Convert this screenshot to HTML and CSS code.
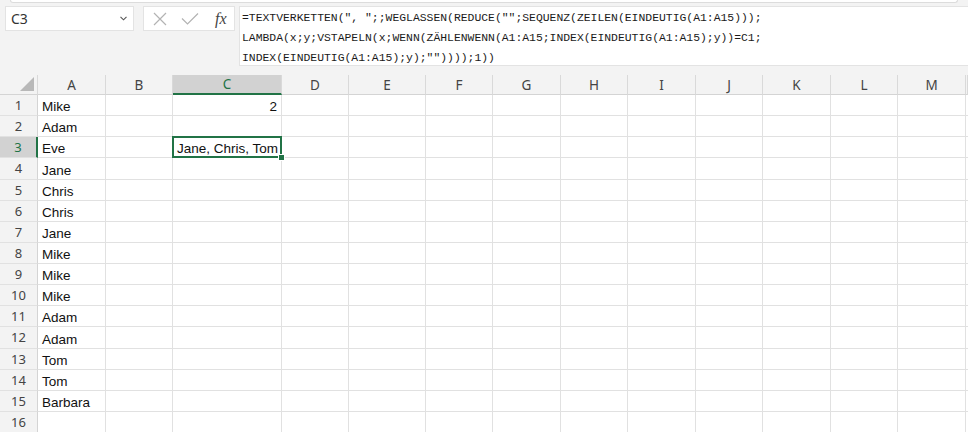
FILE: index.html
```html
<!DOCTYPE html>
<html>

<head>
    <meta charset="utf-8">
    <title>Tabelle1</title>
    <link rel="stylesheet" href="styles.css">
</head>

<body>
    <div class="top">
        <div class="ribbon-edge"></div>
        <div class="formula-row">
            <div class="name-box">
                <span>C3</span>
                <svg width="7" height="5" viewBox="0 0 7 5"><path d="M0.5 0.8L3.5 3.8L6.5 0.8" fill="none" stroke="#555" stroke-width="1.1"/></svg>
            </div>
            <div class="fx-buttons">
                <svg class="icon-cancel" width="14" height="14" viewBox="0 0 14 14"><path d="M1 1L13 13M13 1L1 13" stroke="#b3b3b3" stroke-width="1.2"/></svg>
                <svg class="icon-enter" width="18" height="12" viewBox="0 0 18 12"><path d="M1 5.5L6.5 11L17 0.5" fill="none" stroke="#b3b3b3" stroke-width="1.2"/></svg>
                <span class="fx">fx</span>
            </div>
            <div class="formula">
                <div>=TEXTVERKETTEN(", ";;WEGLASSEN(REDUCE("";SEQUENZ(ZEILEN(EINDEUTIG(A1:A15)));</div>
                <div>LAMBDA(x;y;VSTAPELN(x;WENN(ZÄHLENWENN(A1:A15;INDEX(EINDEUTIG(A1:A15);y))=C1;</div>
                <div>INDEX(EINDEUTIG(A1:A15);y);""))));1))</div>
            </div>
        </div>
    </div>

    <div class="sheet">
        <div class="row head">
            <div class="corner"><svg width="14" height="14" viewBox="0 0 14 14"><polygon points="14,0 14,14 0,14" fill="#b8b8b8"/></svg></div>
            <div>A</div><div>B</div><div class="sel">C</div><div>D</div><div>E</div><div>F</div><div>G</div>
            <div>H</div><div>I</div><div>J</div><div>K</div><div>L</div><div>M</div><div></div>
        </div>
        <div class="row">
            <div class="rh">1</div><div>Mike</div><div></div><div class="num">2</div>
            <div></div><div></div><div></div><div></div><div></div><div></div><div></div><div></div><div></div><div></div><div></div>
        </div>
        <div class="row">
            <div class="rh">2</div><div>Adam</div><div></div><div></div>
            <div></div><div></div><div></div><div></div><div></div><div></div><div></div><div></div><div></div><div></div><div></div>
        </div>
        <div class="row">
            <div class="rh sel">3</div><div>Eve</div><div></div><div class="active">Jane, Chris, Tom<span class="handle"></span></div>
            <div></div><div></div><div></div><div></div><div></div><div></div><div></div><div></div><div></div><div></div><div></div>
        </div>
        <div class="row">
            <div class="rh">4</div><div>Jane</div><div></div><div></div>
            <div></div><div></div><div></div><div></div><div></div><div></div><div></div><div></div><div></div><div></div><div></div>
        </div>
        <div class="row">
            <div class="rh">5</div><div>Chris</div><div></div><div></div>
            <div></div><div></div><div></div><div></div><div></div><div></div><div></div><div></div><div></div><div></div><div></div>
        </div>
        <div class="row">
            <div class="rh">6</div><div>Chris</div><div></div><div></div>
            <div></div><div></div><div></div><div></div><div></div><div></div><div></div><div></div><div></div><div></div><div></div>
        </div>
        <div class="row">
            <div class="rh">7</div><div>Jane</div><div></div><div></div>
            <div></div><div></div><div></div><div></div><div></div><div></div><div></div><div></div><div></div><div></div><div></div>
        </div>
        <div class="row">
            <div class="rh">8</div><div>Mike</div><div></div><div></div>
            <div></div><div></div><div></div><div></div><div></div><div></div><div></div><div></div><div></div><div></div><div></div>
        </div>
        <div class="row">
            <div class="rh">9</div><div>Mike</div><div></div><div></div>
            <div></div><div></div><div></div><div></div><div></div><div></div><div></div><div></div><div></div><div></div><div></div>
        </div>
        <div class="row">
            <div class="rh">10</div><div>Mike</div><div></div><div></div>
            <div></div><div></div><div></div><div></div><div></div><div></div><div></div><div></div><div></div><div></div><div></div>
        </div>
        <div class="row">
            <div class="rh">11</div><div>Adam</div><div></div><div></div>
            <div></div><div></div><div></div><div></div><div></div><div></div><div></div><div></div><div></div><div></div><div></div>
        </div>
        <div class="row">
            <div class="rh">12</div><div>Adam</div><div></div><div></div>
            <div></div><div></div><div></div><div></div><div></div><div></div><div></div><div></div><div></div><div></div><div></div>
        </div>
        <div class="row">
            <div class="rh">13</div><div>Tom</div><div></div><div></div>
            <div></div><div></div><div></div><div></div><div></div><div></div><div></div><div></div><div></div><div></div><div></div>
        </div>
        <div class="row">
            <div class="rh">14</div><div>Tom</div><div></div><div></div>
            <div></div><div></div><div></div><div></div><div></div><div></div><div></div><div></div><div></div><div></div><div></div>
        </div>
        <div class="row">
            <div class="rh">15</div><div>Barbara</div><div></div><div></div>
            <div></div><div></div><div></div><div></div><div></div><div></div><div></div><div></div><div></div><div></div><div></div>
        </div>
        <div class="row">
            <div class="rh">16</div><div></div><div></div><div></div>
            <div></div><div></div><div></div><div></div><div></div><div></div><div></div><div></div><div></div><div></div><div></div>
        </div>
    </div>
</body>

</html>
```

FILE: styles.css
```css
body {
    margin: 0;
    background: #fff;
    font-family: "Liberation Sans", Arial, sans-serif;
    overflow: hidden;
}

/* formula bar area */

.top {
    height: 75px;
    background: #f3f3f3;
}

.ribbon-edge {
    height: 2px;
    margin: 0 10px;
    background: #fff;
    border: 1px solid #dcdcdc;
    border-top: none;
    border-radius: 0 0 6px 6px;
}

.formula-row {
    display: flex;
    align-items: flex-start;
    padding: 3px 0 0 5px;
}

.name-box {
    width: 129px;
    height: 25px;
    box-sizing: border-box;
    display: flex;
    align-items: center;
    justify-content: space-between;
    padding: 0 6px 0 5px;
    background: #fff;
    border: 1px solid #e3e3e3;
    font-family: "Noto Sans", sans-serif;
    font-size: 14px;
    color: #333;
}

.fx-buttons {
    width: 92px;
    height: 25px;
    box-sizing: border-box;
    margin-left: 9px;
    display: flex;
    align-items: center;
    padding-left: 9px;
    background: #fff;
    border: 1px solid #e3e3e3;
}

.icon-enter {
    margin-left: 14px;
}

.fx {
    margin-left: 16px;
    font-family: "Liberation Serif", serif;
    font-style: italic;
    font-size: 16px;
    color: #444;
}

.formula {
    flex: 1;
    height: 60px;
    box-sizing: border-box;
    margin-left: 4px;
    padding: 1px 0 0 2px;
    background: #fff;
    border: 1px solid #e3e3e3;
    border-right: none;
    font-family: "Liberation Mono", monospace;
    font-size: 11.4px;
    line-height: 20px;
    color: #1a1a1a;
}

.formula>div {
    white-space: pre;
}

/* grid */

.row {
    display: grid;
    grid-template-columns: 38px 68px 67px 109px 67px 77px 67px 68px 67px 68px 67px 68px 67px 68px 1fr;
    height: 21.14px;
}

.row>div {
    box-sizing: border-box;
    border-right: 1px solid #e1e1e1;
    border-bottom: 1px solid #e1e1e1;
    padding: 0 4px 1px;
    display: flex;
    align-items: flex-end;
    font-size: 13.5px;
    color: #111;
    white-space: nowrap;
}

.row>div.num {
    justify-content: flex-end;
}

.row>div.rh {
    justify-content: center;
    align-items: center;
    padding: 0;
    background: #f3f3f3;
    border-right-color: #d4d4d4;
    font-family: "Noto Sans", sans-serif;
    font-size: 13px;
    color: #444;
}

.row>div.rh.sel {
    background: #d2d2d2;
    color: #217346;
    border-right: 2px solid #217346;
}

.head {
    height: 20px;
}

.head>div {
    justify-content: center;
    align-items: center;
    padding: 0;
    background: #f3f3f3;
    border-right-color: #d9d9d9;
    border-bottom-color: #d4d4d4;
    font-family: "Noto Sans", sans-serif;
    color: #444;
}

.head>div.sel {
    background: #d2d2d2;
    color: #217346;
    border-bottom: 2px solid #217346;
}

.row>div.corner {
    justify-content: flex-end;
    align-items: flex-end;
    padding: 0 3px 3px 0;
}

.row>div.active {
    position: relative;
}

.active::after {
    content: "";
    position: absolute;
    left: -1px;
    top: -1px;
    right: -1px;
    bottom: -1px;
    border: 2px solid #217346;
}

.handle {
    position: absolute;
    right: -4px;
    bottom: -4px;
    width: 5px;
    height: 5px;
    background: #217346;
    border: 1px solid #fff;
    z-index: 1;
}
```
